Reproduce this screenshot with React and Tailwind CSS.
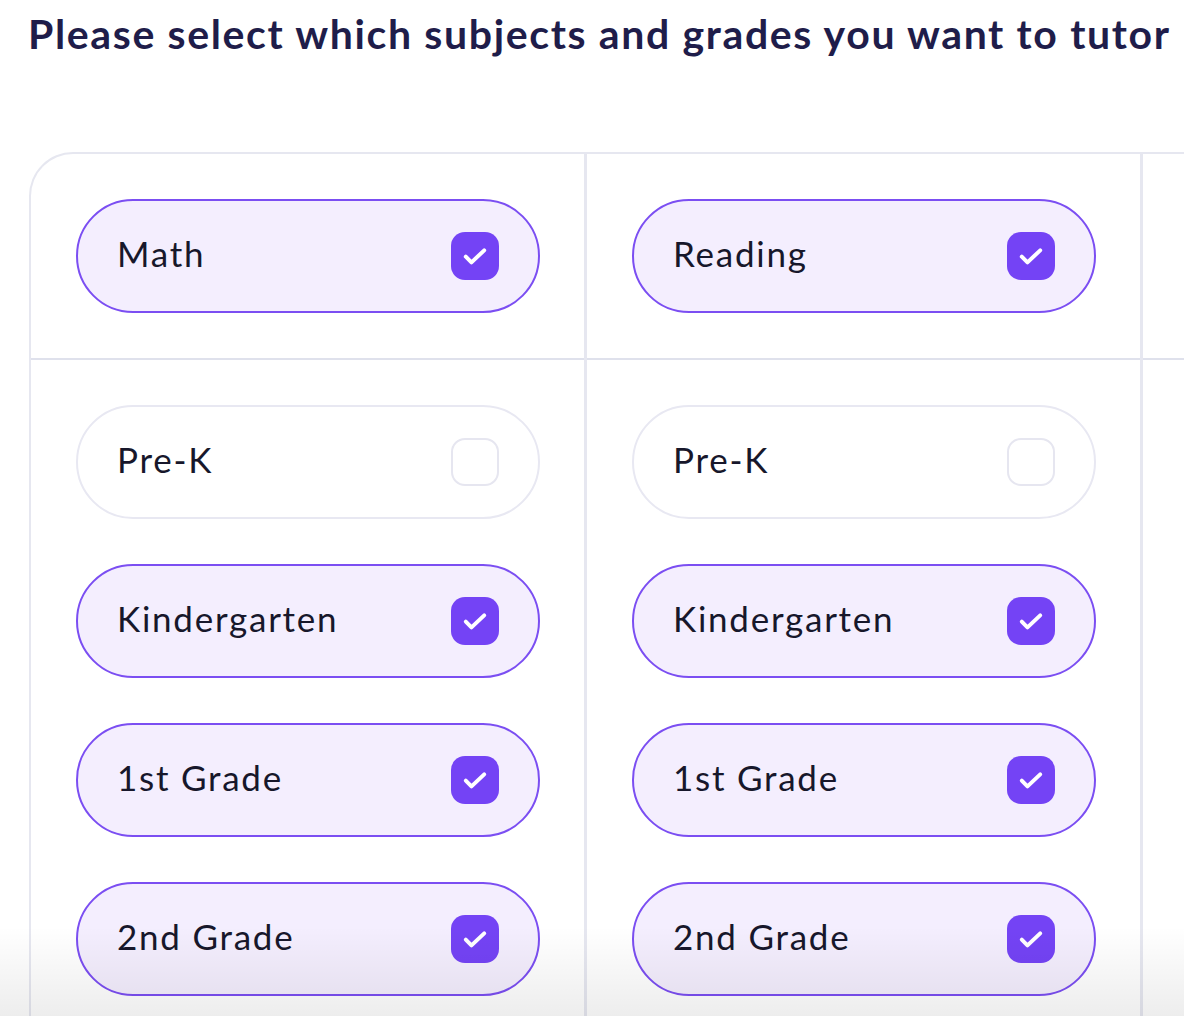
import React from "react";

const subjects = [
  {
    name: "Math",
    grades: [
      { name: "Pre-K", checked: false },
      { name: "Kindergarten", checked: true },
      { name: "1st Grade", checked: true },
      { name: "2nd Grade", checked: true },
    ],
  },
  {
    name: "Reading",
    grades: [
      { name: "Pre-K", checked: false },
      { name: "Kindergarten", checked: true },
      { name: "1st Grade", checked: true },
      { name: "2nd Grade", checked: true },
    ],
  },
  { name: "", grades: [] },
];

function Check({ checked }) {
  if (!checked) {
    return (
      <span className="w-[48px] h-[48px] rounded-[14px] border-2 border-[#e6e6f0] bg-white shrink-0" />
    );
  }
  return (
    <span className="w-[48px] h-[48px] rounded-[14px] bg-[#7443f5] flex items-center justify-center shrink-0">
      <svg width="34" height="34" viewBox="0 0 24 24" fill="none">
        <path
          d="M5.5 12.5l4 4L18.5 8"
          stroke="white"
          strokeWidth="2.8"
          strokeLinecap="round"
          strokeLinejoin="round"
        />
      </svg>
    </span>
  );
}

function Pill({ label, checked }) {
  return (
    <div
      className={
        checked
          ? "w-[464px] h-[114px] rounded-full border-2 border-[#7b4ef2] bg-[#f4eefe] flex items-center justify-between pl-[39px] pr-[39px]"
          : "w-[464px] h-[114px] rounded-full border-2 border-[#e8e8f2] bg-white flex items-center justify-between pl-[39px] pr-[39px]"
      }
    >
      <span
        className="text-[35px] tracking-[0.05em] text-[#17172b] pb-[6px]"
        style={{ fontFamily: "Lato, sans-serif" }}
      >
        {label}
      </span>
      <Check checked={checked} />
    </div>
  );
}

export default function App() {
  return (
    <div className="relative w-[1184px] h-[1016px] overflow-hidden bg-white">
      <h1
        className="pl-[28px] pt-[8px] text-[41px] leading-[52px] font-bold tracking-[0.04em] text-[#1f1d4a] whitespace-nowrap"
        style={{ fontFamily: "Lato, sans-serif" }}
      >
        Please select which subjects and grades you want to tutor
      </h1>

      <div className="ml-[29px] mt-[92px] flex w-[1700px] border-l-2 border-t-2 border-[#e6e7f0] rounded-tl-[44px]">
        {subjects.map((s, i) => (
          <div key={i} className="w-[556px] shrink-0 border-r-[3px] border-[#e6e7f0]">
            <div className="h-[206px] border-b-2 border-[#dfe1ec] pl-[45px] pt-[45px]">
              {s.name && <Pill label={s.name} checked />}
            </div>
            <div className="flex flex-col gap-[45px] pl-[45px] pt-[45px] pb-[60px]">
              {s.grades.map((g, j) => (
                <Pill key={j} label={g.name} checked={g.checked} />
              ))}
            </div>
          </div>
        ))}
      </div>

      <div className="absolute left-0 right-0 bottom-0 h-[90px] bg-gradient-to-b from-transparent to-black/[0.07] pointer-events-none" />
    </div>
  );
}
